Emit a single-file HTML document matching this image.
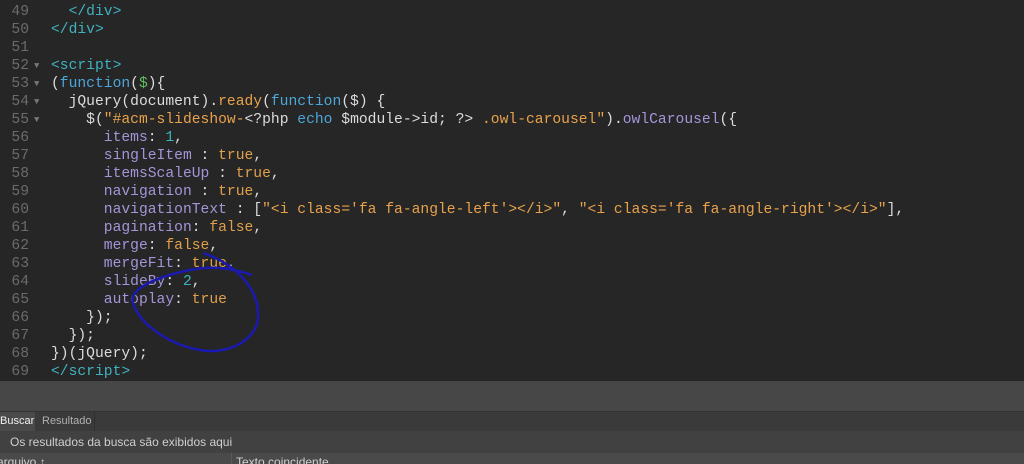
<!DOCTYPE html>
<html><head><meta charset="utf-8"><style>
html,body{margin:0;padding:0;width:1024px;height:464px;overflow:hidden;background:#4a4a4a;}
#ed{position:absolute;left:0;top:0;width:1024px;height:381px;background:#262626;}
.l{position:absolute;left:0;height:18px;line-height:19px;font-family:"Liberation Mono",monospace;font-size:14.66px;white-space:pre;color:#dcdcdc;}
.n{position:absolute;left:0;width:29px;text-align:right;color:#6b6b6b;}
.f{position:absolute;left:34px;color:#777;font-size:9px;}
.c{position:absolute;left:51px;}
.t{color:#3fb2bf}.s{color:#e8a24c}.p{color:#a595d8}.k{color:#4ca6d8}.g{color:#5fbf5f}.o{color:#e8a24c}.b{color:#e0a04a}.num{color:#3fb2bf}
#p1{position:absolute;left:0;top:381px;width:1024px;height:30px;background:#474747;}
#tabs{position:absolute;left:0;top:411px;width:1024px;height:19px;background:#3a3a3a;border-top:1px solid #333;font-family:"Liberation Sans",sans-serif;font-size:11px;line-height:19px;}
.tab{position:absolute;top:0;height:19px;}
#r1{position:absolute;left:0;top:431px;width:1024px;height:22px;background:#414141;font-family:"Liberation Sans",sans-serif;font-size:12px;line-height:22px;color:#cfcfcf;}
#r2{position:absolute;left:0;top:453px;width:1024px;height:11px;background:#4a4a4a;font-family:"Liberation Sans",sans-serif;font-size:12px;color:#cfcfcf;overflow:hidden;}
</style></head><body>
<div id="ed">
<div class="l" style="top:3px"><span class="n">49</span><span class="c">  <span class="t">&lt;/div&gt;</span></span></div>
<div class="l" style="top:21px"><span class="n">50</span><span class="c"><span class="t">&lt;/div&gt;</span></span></div>
<div class="l" style="top:39px"><span class="n">51</span></div>
<div class="l" style="top:57px"><span class="n">52</span><span class="f">▼</span><span class="c"><span class="t">&lt;script&gt;</span></span></div>
<div class="l" style="top:75px"><span class="n">53</span><span class="f">▼</span><span class="c">(<span class="k">function</span>(<span class="g">$</span>){</span></div>
<div class="l" style="top:93px"><span class="n">54</span><span class="f">▼</span><span class="c">  jQuery(document).<span class="o">ready</span>(<span class="k">function</span>($) {</span></div>
<div class="l" style="top:111px"><span class="n">55</span><span class="f">▼</span><span class="c">    $(<span class="s">"#acm-slideshow-</span>&lt;?php <span class="k">echo</span> $module-&gt;id; ?&gt;<span class="s"> .owl-carousel"</span>).<span class="p">owlCarousel</span>({</span></div>
<div class="l" style="top:129px"><span class="n">56</span><span class="c">      <span class="p">items</span>: <span class="num">1</span>,</span></div>
<div class="l" style="top:147px"><span class="n">57</span><span class="c">      <span class="p">singleItem</span> : <span class="b">true</span>,</span></div>
<div class="l" style="top:165px"><span class="n">58</span><span class="c">      <span class="p">itemsScaleUp</span> : <span class="b">true</span>,</span></div>
<div class="l" style="top:183px"><span class="n">59</span><span class="c">      <span class="p">navigation</span> : <span class="b">true</span>,</span></div>
<div class="l" style="top:201px"><span class="n">60</span><span class="c">      <span class="p">navigationText</span> : [<span class="s">"&lt;i class='fa fa-angle-left'&gt;&lt;/i&gt;"</span>, <span class="s">"&lt;i class='fa fa-angle-right'&gt;&lt;/i&gt;"</span>],</span></div>
<div class="l" style="top:219px"><span class="n">61</span><span class="c">      <span class="p">pagination</span>: <span class="b">false</span>,</span></div>
<div class="l" style="top:237px"><span class="n">62</span><span class="c">      <span class="p">merge</span>: <span class="b">false</span>,</span></div>
<div class="l" style="top:255px"><span class="n">63</span><span class="c">      <span class="p">mergeFit</span>: <span class="b">true</span>,</span></div>
<div class="l" style="top:273px"><span class="n">64</span><span class="c">      <span class="p">slideBy</span>: <span class="num">2</span>,</span></div>
<div class="l" style="top:291px"><span class="n">65</span><span class="c">      <span class="p">autoplay</span>: <span class="b">true</span></span></div>
<div class="l" style="top:309px"><span class="n">66</span><span class="c">    });</span></div>
<div class="l" style="top:327px"><span class="n">67</span><span class="c">  });</span></div>
<div class="l" style="top:345px"><span class="n">68</span><span class="c">})(jQuery);</span></div>
<div class="l" style="top:363px"><span class="n">69</span><span class="c"><span class="t">&lt;/script&gt;</span></span></div>
<svg style="position:absolute;left:0;top:0" width="1024" height="381"><path d="M203,253 C230,262 260,285 258,318 C256,342 225,355 200,350 C170,345 140,325 133,303 C128,288 160,276 190,270 C210,266 228,267 252,275" fill="none" stroke="#1a1ab0" stroke-width="2.5"/></svg>
</div>
<div id="p1"></div>
<div id="tabs">
<div class="tab" style="left:0;width:35px;background:#4a4a4a;color:#f0f0f0;">Buscar</div>
<div class="tab" style="left:36px;width:59px;padding-left:6px;box-sizing:border-box;color:#b0b0b0;border-right:1px solid #2e2e2e;">Resultado</div>
</div>
<div id="r1"><span style="position:absolute;left:10px;">Os resultados da busca são exibidos aqui</span></div>
<div id="r2"><span style="position:absolute;left:-3px;top:2px;">arquivo ↑</span><span style="position:absolute;left:231px;top:0;width:1px;height:11px;background:#5a5a5a"></span><span style="position:absolute;left:236px;top:2px;">Texto coincidente</span></div>
</body></html>
